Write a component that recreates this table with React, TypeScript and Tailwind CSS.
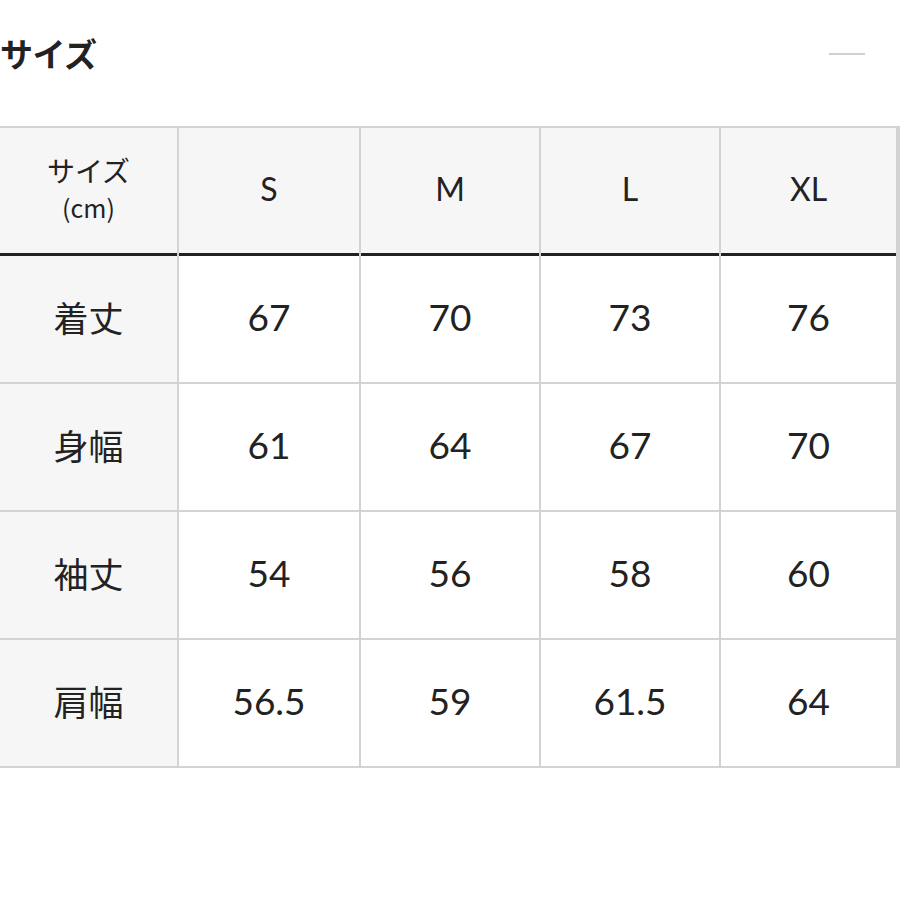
const cols = ["S", "M", "L", "XL"];

const rows: { label: string; values: string[] }[] = [
  { label: "着丈", values: ["67", "70", "73", "76"] },
  { label: "身幅", values: ["61", "64", "67", "70"] },
  { label: "袖丈", values: ["54", "56", "58", "60"] },
  { label: "肩幅", values: ["56.5", "59", "61.5", "64"] },
];

const font = "font-['Lato','Noto_Sans_CJK_JP',sans-serif]";
const grid = "grid grid-cols-[177px_180px_178px_178px_175px] gap-x-[2px]";

export default function App() {
  return (
    <div className={`relative h-[900px] w-[900px] overflow-hidden bg-white text-[#222] ${font}`}>
      {/* Section title */}
      <div className="flex items-center justify-between pt-[33px]">
        <h2 className="text-[33px] font-bold leading-[40px] tracking-[-0.5px] font-['Noto_Sans_CJK_JP',sans-serif]">
          サイズ
        </h2>
        <div className="mr-[35px] mt-[2px] h-[2px] w-[36px] bg-[#d0d0d0]" />
      </div>

      {/* Size table */}
      <div className="ml-[-2px] mt-[53px] w-[902px] border-2 border-[#d3d3d3] bg-[#d3d3d3]">
        <div className={grid}>
          <div className="flex h-[128px] flex-col items-center justify-center border-b-[3px] border-[#222] bg-[#f6f6f6] pb-[4px] text-[28px] leading-[37px] font-['Noto_Sans_CJK_JP',sans-serif]">
            <span>サイズ</span>
            <span className="text-[25px]">(cm)</span>
          </div>
          {cols.map((c) => (
            <div
              key={c}
              className="flex h-[128px] items-center justify-center border-b-[3px] border-[#222] bg-[#f6f6f6] pb-[3px] text-[32px]"
            >
              {c}
            </div>
          ))}
        </div>

        {rows.map((r, i) => (
          <div key={r.label} className={`${grid} ${i > 0 ? "mt-[2px]" : ""}`}>
            <div className="flex h-[126px] items-center justify-center bg-[#f6f6f6] pb-[4px] text-[35px] font-['Noto_Sans_CJK_JP',sans-serif]">
              {r.label}
            </div>
            {r.values.map((v, j) => (
              <div
                key={j}
                className="flex h-[126px] items-center justify-center bg-white pb-[4px] text-[37px]"
              >
                {v}
              </div>
            ))}
          </div>
        ))}
      </div>
    </div>
  );
}
